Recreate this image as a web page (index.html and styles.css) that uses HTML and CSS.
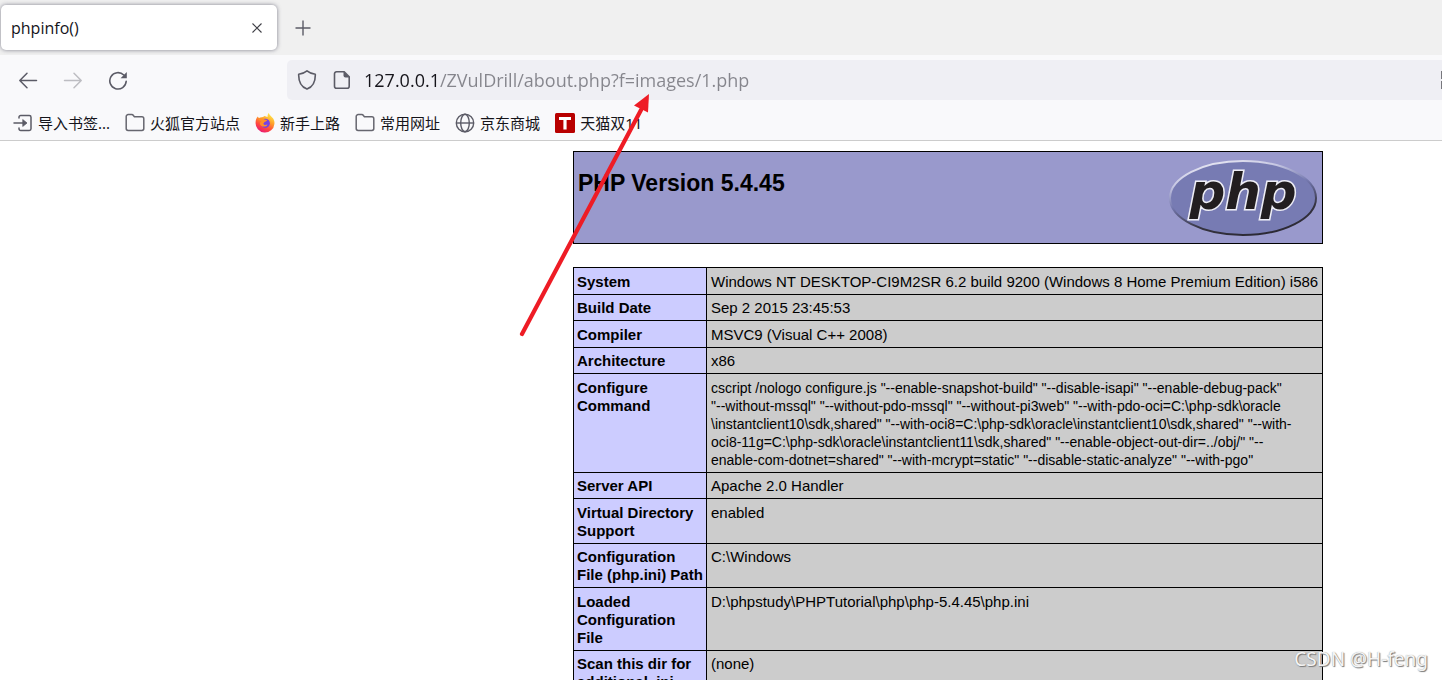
FILE: index.html
```html
<!DOCTYPE html>
<html lang="zh-CN">
<head>
<meta charset="utf-8">
<title>phpinfo()</title>
<link rel="stylesheet" href="styles.css">
</head>
<body>
<header class="browser">
  <div class="tab-strip">
    <div class="tab">
      <span class="tab-title">phpinfo()</span>
      <button class="icon-button tab-close" type="button" aria-label="关闭标签页">
        <svg width="12" height="12" viewBox="0 0 12 12"><path d="M1.500 1.500l9 9M10.500 1.500l-9 9" fill="none" stroke="#3f3f46" stroke-width="1.100"/></svg>
      </button>
    </div>
    <button class="icon-button new-tab" type="button" aria-label="新建标签页">
      <svg width="16" height="16" viewBox="0 0 16 16"><path d="M8 .5v15M.5 8h15" fill="none" stroke="#5b5b66" stroke-width="1.400"/></svg>
    </button>
  </div>
  <nav class="nav-bar">
    <div class="nav-buttons">
      <button class="icon-button" type="button" aria-label="后退">
        <svg width="20" height="20" viewBox="0 0 20 20" fill="none" stroke="#5b5b66" stroke-width="1.500" stroke-linecap="round" stroke-linejoin="round"><path d="M18.500 10.500H2M9 3.300L1.800 10.500 9 17.700"/></svg>
      </button>
      <button class="icon-button" type="button" aria-label="前进" disabled>
        <svg width="20" height="20" viewBox="0 0 20 20" fill="none" stroke="#bdbdc2" stroke-width="1.500" stroke-linecap="round" stroke-linejoin="round"><path d="M1.500 10.500H18M11 3.300l7.200 7.200-7.200 7.200"/></svg>
      </button>
      <button class="icon-button" type="button" aria-label="刷新">
        <svg width="20" height="20" viewBox="0 0 20 20"><path d="M15.800 5A8.200 8.200 0 1 0 18.200 11.300" fill="none" stroke="#5b5b66" stroke-width="1.600" stroke-linecap="round"/><path d="M18.800 2v6.200h-6.200z" fill="#5b5b66"/></svg>
      </button>
    </div>
    <div class="url-bar">
      <svg width="20" height="20" viewBox="0 0 20 20"><path d="M10 .9c2.300 1.900 5.200 3 8.300 3.400.2 6.500-2 12.300-8.300 14.800C3.700 16.600 1.500 10.800 1.700 4.300 4.800 3.900 7.700 2.800 10 .9z" fill="none" stroke="#5b5b66" stroke-width="1.600" stroke-linejoin="round"/></svg>
      <svg width="20" height="20" viewBox="0 0 20 20"><path d="M4.500 1.800h7.700l5 5v9.400a2 2 0 0 1-2 2H4.500a2 2 0 0 1-2-2V3.800a2 2 0 0 1 2-2z" fill="none" stroke="#5b5b66" stroke-width="1.600"/><path d="M11.500 1.500v4a2 2 0 0 0 2 2h4z" fill="#5b5b66"/></svg>
      <input class="url-input" type="text" aria-label="地址" value="127.0.0.1/ZVulDrill/about.php?f=images/1.php">
      <svg class="qr" width="2" height="20" viewBox="0 0 2 20"><path d="M1 1h1v8H1zM1 11h1v8H1z" fill="#77777d"/></svg>
    </div>
  </nav>
  <nav class="bookmarks">
    <a class="bookmark" href="#"><svg width="20" height="20" viewBox="0 0 20 20" fill="none" stroke="#5b5b66" stroke-width="1.500" stroke-linecap="round"><path d="M6 5V4.200a1.700 1.700 0 0 1 1.700-1.700h8.600A1.700 1.700 0 0 1 18 4.200v11.600a1.700 1.700 0 0 1-1.700 1.700H7.700A1.700 1.700 0 0 1 6 15.800V15M1 10h10"/><path d="M10 6.800l4 3.200-4 3.200z" fill="#5b5b66" stroke-width=".8"/></svg>导入书签...</a>
    <a class="bookmark" href="#"><svg width="20" height="20" viewBox="0 0 20 20"><path d="M1.200 15.500v-12A1.900 1.900 0 0 1 3.100 1.600h3.600c.8 0 1.300.3 1.700.9l1 1.300h7.500a1.900 1.900 0 0 1 1.900 1.900v9.800a1.900 1.900 0 0 1-1.900 1.900H3.100a1.900 1.900 0 0 1-1.900-1.900z" fill="none" stroke="#66666f" stroke-width="1.500"/></svg>火狐官方站点</a>
    <a class="bookmark" href="#"><svg width="20" height="20" viewBox="0 0 20 20"><defs><linearGradient id="flame" x1=".8" y1="0" x2=".3" y2="1"><stop offset="0" stop-color="#fff44f"/><stop offset=".4" stop-color="#ffa02a"/><stop offset=".7" stop-color="#ff4a3c"/><stop offset="1" stop-color="#e8177a"/></linearGradient></defs><path d="M2.800 3.500c.3.900.8 1.300 1.200 1.600C5 4.400 6 4.200 7 4.300 8 4 9 3.500 9.500 3c1 .3 2.200.6 3 1 .1-1.500.3-3 1.200-4 .7 2.400 3 3.500 4 5 1 .9 2.100 3.500 1.700 6A9.400 9.300 0 1 1 .6 9.500C.6 7 1.300 5 2.800 3.500z" fill="url(#flame)"/><circle cx="10.300" cy="10.300" r="4.600" fill="#7542e5"/><path d="M3.500 6.200c2-1.700 5-.9 6 .4l2.700.4c-.3 1.300-1.700 1.700-2.700 2-.4 1.200-1.400 1.200-1 2.100.8 1.500 2.700.6 4 .3-.8 2.400-4.800 3-6.600 1-1.900-1.700-.4-3.700.5-4.300-1-.7-2.200-.6-2.900-1.900z" fill="#ff9028"/></svg>新手上路</a>
    <a class="bookmark" href="#"><svg width="20" height="20" viewBox="0 0 20 20"><path d="M1.200 15.500v-12A1.900 1.900 0 0 1 3.100 1.600h3.600c.8 0 1.300.3 1.700.9l1 1.300h7.500a1.900 1.900 0 0 1 1.900 1.900v9.800a1.900 1.900 0 0 1-1.900 1.900H3.100a1.900 1.900 0 0 1-1.900-1.900z" fill="none" stroke="#66666f" stroke-width="1.500"/></svg>常用网址</a>
    <a class="bookmark" href="#"><svg width="20" height="20" viewBox="0 0 20 20" fill="none" stroke="#5b5b66" stroke-width="1.400"><circle cx="10" cy="10" r="8.700"/><ellipse cx="10" cy="10" rx="4.300" ry="8.700"/><path d="M1.500 10h17"/></svg>京东商城</a>
    <a class="bookmark" href="#"><svg width="20" height="20" viewBox="0 0 20 20"><rect width="20" height="20" rx="1.500" fill="#b80000"/><path d="M4 4h12v3h-4.400v9.500H8.400V7H4z" fill="#fff"/></svg>天猫双11</a>
  </nav>
</header>

<main class="page">
  <section class="banner">
    <h1 class="banner-title">PHP Version 5.4.45</h1>
    <svg class="php-logo" width="150" height="82" viewBox="0 0 150 82" role="img" aria-label="PHP Logo">
      <defs><linearGradient id="rim" x1=".3" y1="0" x2=".7" y2="1"><stop offset="0" stop-color="#e6e6f2"/><stop offset=".2" stop-color="#c5c6e2"/><stop offset=".45" stop-color="#7377ad"/><stop offset=".75" stop-color="#35333f"/><stop offset="1" stop-color="#2a2833"/></linearGradient></defs>
      <ellipse cx="75" cy="42" rx="73" ry="37" fill="#777bb3" stroke="url(#rim)" stroke-width="2"/>
      <text class="php-word" x="75" y="53" text-anchor="middle">php</text>
    </svg>
  </section>

  <table class="info">
    <tbody>
      <tr><th scope="row">System</th><td>Windows NT DESKTOP-CI9M2SR 6.2 build 9200 (Windows 8 Home Premium Edition) i586</td></tr>
      <tr><th scope="row">Build Date</th><td>Sep 2 2015 23:45:53</td></tr>
      <tr><th scope="row">Compiler</th><td>MSVC9 (Visual C++ 2008)</td></tr>
      <tr><th scope="row">Architecture</th><td>x86</td></tr>
      <tr><th scope="row">Configure Command</th><td class="command">cscript /nologo configure.js "--enable-snapshot-build" "--disable-isapi" "--enable-debug-pack"
"--without-mssql" "--without-pdo-mssql" "--without-pi3web" "--with-pdo-oci=C:\php-sdk\oracle
\instantclient10\sdk,shared" "--with-oci8=C:\php-sdk\oracle\instantclient10\sdk,shared" "--with-
oci8-11g=C:\php-sdk\oracle\instantclient11\sdk,shared" "--enable-object-out-dir=../obj/" "--
enable-com-dotnet=shared" "--with-mcrypt=static" "--disable-static-analyze" "--with-pgo"</td></tr>
      <tr><th scope="row">Server API</th><td>Apache 2.0 Handler</td></tr>
      <tr><th scope="row">Virtual Directory Support</th><td>enabled</td></tr>
      <tr><th scope="row">Configuration<br>File (php.ini) Path</th><td>C:\Windows</td></tr>
      <tr><th scope="row">Loaded Configuration<br>File</th><td>D:\phpstudy\PHPTutorial\php\php-5.4.45\php.ini</td></tr>
      <tr><th scope="row">Scan this dir for additional .ini files</th><td>(none)</td></tr>
    </tbody>
  </table>
</main>

<svg class="arrow" width="140" height="250" viewBox="0 0 140 250" aria-hidden="true"><path d="M7 244L126 20" stroke="#ee1c25" stroke-width="4.200" stroke-linecap="round"/><path d="M134 4l-1 18.500-7-3.500-7-3.500z" fill="#ee1c25"/></svg>
<p class="watermark">CSDN @H-feng</p>
</body>
</html>
```

FILE: styles.css
```css
* {
  box-sizing: border-box;
}

body {
  margin: 0;
  height: 100vh;
  overflow: hidden;
  position: relative;
  background: #fff;
  color: #000;
  font-family: "Liberation Sans", Arial, sans-serif;
}

svg {
  display: block;
  flex: none;
}

.browser {
  background: #f9f9fb;
  border-bottom: 1px solid #ccc;
  color: #15141a;
  font-family: "Noto Sans", "Noto Sans CJK SC", sans-serif;
}

.icon-button {
  display: flex;
  align-items: center;
  justify-content: center;
  padding: 0;
  border: 0;
  background: none;
}

.tab-strip {
  display: flex;
  align-items: center;
  gap: 18px;
  height: 55px;
  background: #f0f0f0;
}

.tab {
  display: flex;
  align-items: center;
  justify-content: space-between;
  width: 276px;
  height: 45px;
  margin-left: 1px;
  padding: 0 14px 0 10px;
  border-radius: 5px;
  background: #fff;
  box-shadow: 0 0 4px rgba(80, 80, 100, 0.7);
}

.tab-title {
  font-family: "Open Sans", sans-serif;
  font-size: 16px;
  line-height: 20px;
}

.nav-bar {
  display: flex;
  align-items: center;
  height: 50px;
}

.nav-buttons {
  display: flex;
  gap: 25px;
  width: 287px;
  padding-left: 18px;
}

.url-bar {
  display: flex;
  flex: 1;
  align-items: center;
  gap: 15px;
  height: 40px;
  padding-left: 10px;
  border-radius: 5px 0 0 5px;
  background: #efeff4;
}

.url-input {
  flex: 1;
  min-width: 0;
  margin-left: -3px;
  padding: 0;
  border: 0;
  outline: 0;
  background: linear-gradient(90deg, #15141a 75px, #85858c 75px);
  -webkit-background-clip: text;
  background-clip: text;
  -webkit-text-fill-color: transparent;
  font-family: "Open Sans", sans-serif;
  font-size: 18px;
}

.bookmarks {
  display: flex;
  align-items: center;
  gap: 15px;
  height: 35px;
  padding: 0 0 0 13px;
}

.bookmark {
  display: flex;
  align-items: center;
  gap: 5px;
  color: #15141a;
  font-size: 15px;
  line-height: 20px;
  text-decoration: none;
  white-space: nowrap;
}

.page {
  padding: 10px 0 0 573px;
  font-size: 15px;
  line-height: 18px;
}

.banner {
  display: flex;
  justify-content: space-between;
  width: 750px;
  height: 93px;
  padding: 4px;
  border: 1px solid #000;
  background: #9999cc;
}

.banner-title {
  margin: 14px 0 0;
  font-size: 23px;
  line-height: 26px;
}

.php-word {
  font-family: "DejaVu Sans", sans-serif;
  font-size: 50px;
  font-style: italic;
  font-weight: 700;
  fill: #221e20;
  stroke: #eeeef6;
  stroke-width: 3px;
  paint-order: stroke;
}

.info {
  width: 750px;
  margin-top: 23px;
  border-collapse: collapse;
  table-layout: fixed;
}

.info th,
.info td {
  padding: 5px 0 3px 4px;
  border: 1px solid #000;
  text-align: left;
  vertical-align: top;
}

.info tr:nth-child(even) > * {
  padding-top: 4px;
}

.info th {
  width: 133px;
  padding-left: 3px;
  background: #ccccff;
}

.info td {
  background: #cccccc;
}

.info .command {
  font-size: 14px;
  white-space: pre;
}

.arrow {
  position: absolute;
  left: 515px;
  top: 90px;
}

.watermark {
  position: absolute;
  right: 14px;
  bottom: 8px;
  margin: 0;
  color: #f4f4f4;
  font-family: "Noto Sans", sans-serif;
  font-size: 19px;
  line-height: 26px;
  text-shadow: 1px 1px 1px #777, 0 0 1px #999;
}
```
